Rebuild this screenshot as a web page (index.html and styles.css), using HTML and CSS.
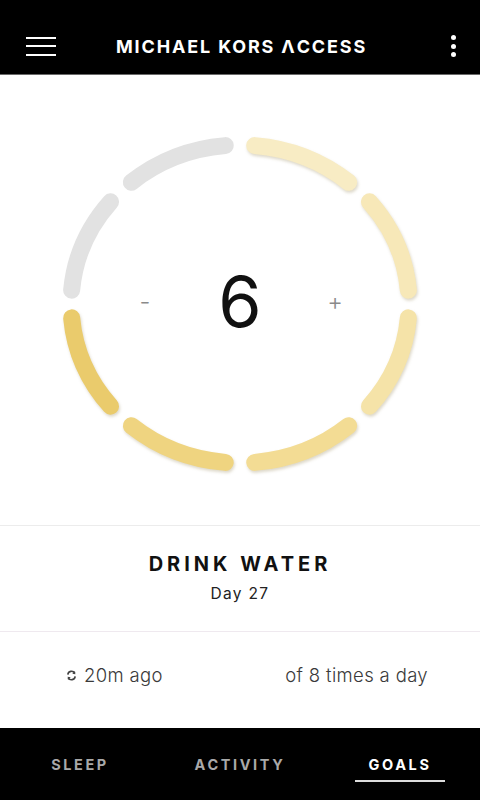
FILE: index.html
```html
<!DOCTYPE html>
<html lang="en">
<head>
  <meta charset="UTF-8" />
  <meta name="viewport" content="width=device-width, initial-scale=1.0" />
  <title>Michael Kors Access - Goals</title>
  <link rel="stylesheet" href="styles.css">
</head>
<body>
  <header class="topbar">
    <button class="menu-btn" aria-label="Menu">
      <span></span><span></span><span></span>
    </button>
    <h1 class="brand">MICHAEL KORS ΛCCESS</h1>
    <button class="more-btn" aria-label="More">
      <span></span><span></span><span></span>
    </button>
  </header>

  <main class="goal">
    <!-- Fortschrittsring: 6 von 8 -->
    <section class="ring">
      <svg class="ring-svg" width="380" height="360" viewBox="0 0 380 360">
        <g class="seg-off">
          <path d="M21.64 166.14 A169 159 0 0 1 60.55 77.79" />
          <path d="M81.37 58.21 A169 159 0 0 1 175.26 21.60" />
        </g>
        <g class="seg-on">
          <path class="s6" d="M21.64 193.86 A169 159 0 0 0 60.55 282.21" />
          <path class="s5" d="M81.37 301.79 A169 159 0 0 0 175.26 338.40" />
          <path class="s4" d="M204.74 338.40 A169 159 0 0 0 298.63 301.79" />
          <path class="s3" d="M319.45 282.21 A169 159 0 0 0 358.36 193.86" />
          <path class="s2" d="M358.36 166.14 A169 159 0 0 0 319.45 77.79" />
          <path class="s1" d="M298.63 58.21 A169 159 0 0 0 204.74 21.60" />
        </g>
      </svg>
      <div class="counter">
        <button class="step">-</button>
        <span class="value">6</span>
        <button class="step">+</button>
      </div>
    </section>

    <section class="goal-title">
      <h2>DRINK WATER</h2>
      <p>Day 27</p>
    </section>

    <section class="goal-meta">
      <span class="synced">
        <svg width="11" height="11" viewBox="0 0 12 12">
          <path d="M2 5 A4 4 0 0 1 9.5 3.5" />
          <path d="M10 7 A4 4 0 0 1 2.5 8.5" />
          <path class="tip" d="M9.8 1.2 L10.2 4.6 L6.9 4 Z" />
          <path class="tip" d="M2.2 10.8 L1.8 7.4 L5.1 8 Z" />
        </svg>
        20m ago
      </span>
      <span>of 8 times a day</span>
    </section>
  </main>

  <footer class="tabs">
    <button class="tab">SLEEP</button>
    <button class="tab">ACTIVITY</button>
    <button class="tab active">GOALS</button>
  </footer>
</body>
</html>
```

FILE: styles.css
```css
* {
  box-sizing: border-box;
}
html, body {
  margin: 0;
  height: 100%;
}
body {
  font-family: 'Inter', 'Liberation Sans', sans-serif;
  background-color: #fff;
  color: #111;
  display: flex;
  flex-direction: column;
  width: 480px;
  height: 800px;
  overflow: hidden;
}
button {
  font: inherit;
  background: none;
  border: none;
  padding: 0;
  color: inherit;
}

/* Kopfzeile */
.topbar {
  height: 75px;
  background-color: #000;
  border-bottom: 1px solid #6a6a6a;
  display: grid;
  grid-template-columns: 60px 1fr 60px;
  align-items: center;
  padding: 18px 22px 0 26px;
}
.menu-btn {
  width: 30px;
  display: flex;
  flex-direction: column;
  gap: 6.5px;
}
.menu-btn span {
  display: block;
  height: 2px;
  background-color: #fff;
}
.brand {
  margin: 0 0 0 -1px;
  text-align: center;
  color: #fff;
  font-size: 18px;
  font-weight: 700;
  letter-spacing: 1.85px;
  white-space: nowrap;
}
.more-btn {
  width: 10px;
  justify-self: end;
  display: flex;
  flex-direction: column;
  align-items: center;
  gap: 3.5px;
}
.more-btn span {
  width: 5px;
  height: 5px;
  border-radius: 50%;
  background-color: #fff;
}

/* Inhalt */
.goal {
  flex: 1;
  display: flex;
  flex-direction: column;
}
.ring {
  height: 450px;
  display: grid;
  place-items: center;
  padding-top: 7px;
}
.ring-svg,
.counter {
  grid-area: 1 / 1;
}
.ring path {
  fill: none;
  stroke-width: 17;
  stroke-linecap: round;
}
.seg-off path {
  stroke: #e2e2e2;
}
.seg-on {
  filter: drop-shadow(1px 2px 1.5px rgba(120, 100, 40, 0.25));
}
.seg-on .s6 { stroke: #eacb6c; }
.seg-on .s5 { stroke: #efd480; }
.seg-on .s4 { stroke: #f3dc94; }
.seg-on .s3 { stroke: #f5e3a8; }
.seg-on .s2 { stroke: #f7e8b8; }
.seg-on .s1 { stroke: #f8ecc4; }

.counter {
  display: flex;
  align-items: center;
  margin-top: -4px;
}
.step {
  width: 60px;
  text-align: center;
  font-size: 24px;
  font-weight: 300;
  color: #8a8a8a;
}
.value {
  width: 130px;
  text-align: center;
  font-size: 70px;
  font-weight: 400;
  color: #111;
}

.goal-title {
  height: 107px;
  border-top: 1px solid #ececec;
  border-bottom: 1px solid #efe9ef;
  display: flex;
  flex-direction: column;
  align-items: center;
  padding-top: 26px;
}
.goal-title h2 {
  margin: 0;
  font-size: 20px;
  font-weight: 700;
  letter-spacing: 4px;
  color: #111;
}
.goal-title p {
  margin: 8px 0 0;
  font-size: 15.5px;
  letter-spacing: 1.3px;
  color: #222;
}

.goal-meta {
  flex: 1;
  display: flex;
  justify-content: space-between;
  align-items: center;
  padding: 0 52px 10px 66px;
  font-size: 18.5px;
  font-weight: 300;
  color: #3a3a3a;
  letter-spacing: 0.35px;
}
.synced {
  display: flex;
  align-items: center;
  gap: 7px;
}
.synced svg path {
  fill: none;
  stroke: #444;
  stroke-width: 1.8;
}
.synced svg .tip {
  fill: #444;
  stroke: none;
}

/* Tabs unten */
.tabs {
  height: 72px;
  background-color: #000;
  display: flex;
  align-items: center;
  justify-content: space-between;
  padding: 0 35px 0 35px;
}
.tab {
  width: 90px;
  text-align: center;
  font-size: 14.5px;
  font-weight: 700;
  letter-spacing: 2.6px;
  color: #a9a9a9;
  padding: 7px 0 7px;
  border-bottom: 2px solid transparent;
  margin-top: 2px;
}
.tab:nth-child(2) {
  width: 110px;
}
.tab.active {
  color: #fff;
  border-bottom-color: #ddd;
}
```
